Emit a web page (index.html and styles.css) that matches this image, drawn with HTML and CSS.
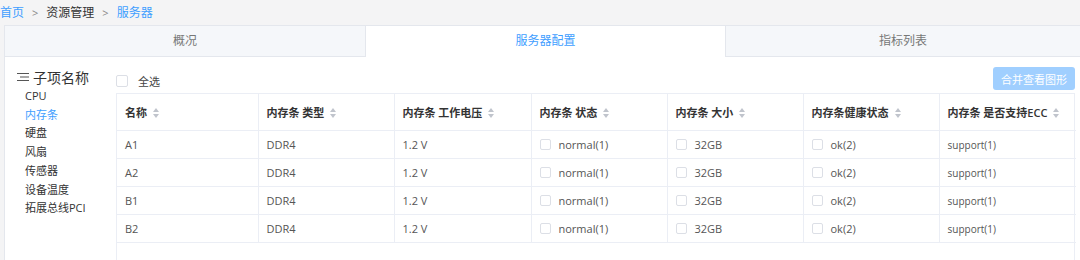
FILE: index.html
```html
<!DOCTYPE html>
<html lang="zh-CN">
<head>
    <meta charset="UTF-8">
    <title>服务器配置</title>
    <link rel="stylesheet" href="styles.css">
</head>
<body>
    <div class="breadcrumb">
        <a class="crumb link">首页</a>
        <span class="sep">&gt;</span>
        <span class="crumb">资源管理</span>
        <span class="sep">&gt;</span>
        <a class="crumb link">服务器</a>
    </div>

    <div class="panel">
        <div class="tabs">
            <div class="tab">概况</div>
            <div class="tab active">服务器配置</div>
            <div class="tab">指标列表</div>
        </div>

        <div class="content">
            <div class="sidebar">
                <div class="side-title">
                    <svg width="12" height="10" viewBox="0 0 12 10"><path d="M0 1.5h12M3 5h9M0 8.5h12" stroke="#555" stroke-width="1.2" fill="none"/></svg>
                    子项名称
                </div>
                <ul class="side-list">
                    <li>CPU</li>
                    <li class="current">内存条</li>
                    <li>硬盘</li>
                    <li>风扇</li>
                    <li>传感器</li>
                    <li>设备温度</li>
                    <li>拓展总线PCI</li>
                </ul>
            </div>

            <div class="main">
                <div class="toolbar">
                    <label class="check-all"><span class="box"></span>全选</label>
                    <button class="merge" disabled>合并查看图形</button>
                </div>

                <div class="table-wrap">
                    <table>
                        <colgroup>
                            <col style="width: 141px">
                            <col style="width: 136px">
                            <col style="width: 137px">
                            <col style="width: 136px">
                            <col style="width: 136px">
                            <col style="width: 136px">
                            <col style="width: 137px">
                        </colgroup>
                        <thead>
                            <tr>
                                <th>名称<i class="sort"></i></th>
                                <th>内存条 类型<i class="sort"></i></th>
                                <th>内存条 工作电压<i class="sort"></i></th>
                                <th>内存条 状态<i class="sort"></i></th>
                                <th>内存条 大小<i class="sort"></i></th>
                                <th>内存条健康状态<i class="sort"></i></th>
                                <th>内存条 是否支持ECC<i class="sort"></i></th>
                            </tr>
                        </thead>
                        <tbody id="rows"></tbody>
                    </table>
                </div>
            </div>
        </div>
    </div>

    <script>
        const names = ['A1', 'A2', 'B1', 'B2'];
        const rows = document.getElementById('rows');

        names.forEach(name => {
            const tr = document.createElement('tr');
            tr.innerHTML = `
                <td>${name}</td>
                <td>DDR4</td>
                <td>1.2 V</td>
                <td><span class="box"></span>normal(1)</td>
                <td><span class="box"></span>32GB</td>
                <td><span class="box"></span>ok(2)</td>
                <td class="small">support(1)</td>`;
            rows.appendChild(tr);
        });
    </script>
</body>
</html>
```

FILE: styles.css
```css
body {
    margin: 0;
    background-color: #f4f4f5;
    font-family: "Open Sans", "Noto Sans CJK SC", sans-serif;
    color: #333;
    overflow: hidden;
}
.breadcrumb {
    height: 25px;
    display: flex;
    align-items: center;
    font-size: 12px;
    padding-bottom: 1px;
    box-sizing: border-box;
}
.crumb {
    color: #333;
}
.crumb.link {
    color: #409eff;
}
.sep {
    color: #888;
    margin: 0 8px;
    font-size: 11px;
}
.panel {
    margin-left: 4px;
    background-color: #fff;
    border: 1px solid #e4e7ed;
    border-right: none;
    height: 234px;
    overflow: hidden;
}
.tabs {
    display: flex;
    height: 30px;
    border-bottom: 1px solid #e4e7ed;
    background-color: #f5f7fa;
}
.tab {
    width: 360px;
    box-sizing: border-box;
    text-align: center;
    line-height: 30px;
    font-size: 12px;
    color: #777;
}
.tab.active {
    width: 361px;
    background-color: #fff;
    color: #409eff;
    border-left: 1px solid #e4e7ed;
    border-right: 1px solid #e4e7ed;
    height: 31px;
}
.tab:last-child {
    flex: 1;
}
.content {
    display: flex;
}
.sidebar {
    width: 111px;
    padding: 10px 0 0 12px;
    box-sizing: border-box;
}
.side-title {
    display: flex;
    align-items: center;
    gap: 4px;
    font-size: 14px;
    color: #333;
}
.side-list {
    list-style: none;
    margin: 0;
    padding: 0 0 0 8px;
}
.side-list li {
    font-size: 11px;
    line-height: 18.7px;
    color: #333;
}
.side-list li.current {
    color: #409eff;
}
.main {
    width: 959px;
}
.toolbar {
    display: flex;
    justify-content: space-between;
    align-items: center;
    height: 36px;
    padding-top: 1px;
    box-sizing: border-box;
}
.check-all {
    display: flex;
    align-items: center;
    font-size: 11px;
    color: #444;
    padding-top: 11px;
}
.box {
    display: inline-block;
    width: 11px;
    height: 11px;
    border: 1px solid #dcdfe6;
    border-radius: 2px;
    box-sizing: border-box;
    margin-right: 8px;
    vertical-align: -1px;
    background-color: #fff;
}
.check-all .box {
    width: 12px;
    height: 12px;
    margin-right: 10px;
}
.merge {
    background-color: #a0cfff;
    color: #fff;
    border: none;
    border-radius: 3px;
    font-family: inherit;
    font-size: 11px;
    width: 82px;
    height: 23px;
    padding: 0;
    margin-top: 6px;
}
.table-wrap {
    border: 1px solid #ebeef5;
    height: 200px;
}
table {
    border-collapse: collapse;
    table-layout: fixed;
    width: 959px;
}
th, td {
    border-right: 1px solid #ebeef5;
    border-bottom: 1px solid #ebeef5;
    text-align: left;
    padding: 0 8px;
    white-space: nowrap;
    overflow: hidden;
}
th:last-child, td:last-child {
    border-right: none;
}
th {
    height: 36px;
    font-size: 11px;
    font-weight: 600;
    color: #333;
}
td {
    height: 27px;
    font-size: 11px;
    color: #555;
}
td.small {
    font-size: 10px;
}
.sort {
    display: inline-block;
    position: relative;
    width: 7px;
    height: 10px;
    margin-left: 6px;
    vertical-align: -1px;
}
.sort::before, .sort::after {
    content: "";
    position: absolute;
    left: 0;
    border-left: 3.5px solid transparent;
    border-right: 3.5px solid transparent;
}
.sort::before {
    top: 0;
    border-bottom: 4px solid #c0c4cc;
}
.sort::after {
    bottom: 0;
    border-top: 4px solid #c0c4cc;
}
```
